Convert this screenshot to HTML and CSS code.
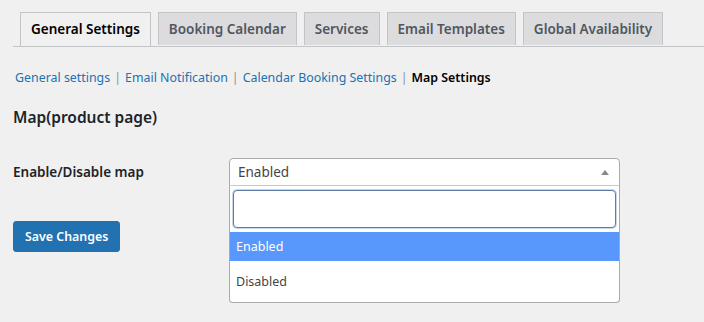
FILE: index.html
```html
<!DOCTYPE html>
<html lang="en">
<head>
  <meta charset="UTF-8">
  <title>Map Settings</title>
  <link rel="stylesheet" href="styles.css">
</head>
<body>
  <div class="wrap">
    <nav class="nav-tab-wrapper">
      <a class="nav-tab nav-tab-active">General Settings</a>
      <a class="nav-tab">Booking Calendar</a>
      <a class="nav-tab">Services</a>
      <a class="nav-tab">Email Templates</a>
      <a class="nav-tab">Global Availability</a>
    </nav>

    <ul class="subsubsub">
      <li><a href="#">General settings</a><span class="sep">|</span></li>
      <li><a href="#">Email Notification</a><span class="sep">|</span></li>
      <li><a href="#">Calendar Booking Settings</a><span class="sep">|</span></li>
      <li><span class="current">Map Settings</span></li>
    </ul>

    <h2 class="section-title">Map(product page)</h2>

    <div class="form-table">
      <div class="form-row">
        <label class="form-label">Enable/Disable map</label>
        <div class="select-wrap">
          <div class="select-box">
            <span class="select-value">Enabled</span>
            <span class="select-arrow"></span>
          </div>
          <!-- open dropdown lies over the button -->
          <div class="select-dropdown">
            <div class="select-search"><input type="text"></div>
            <ul class="select-results">
              <li class="option highlighted">Enabled</li>
              <li class="option">Disabled</li>
            </ul>
          </div>
        </div>
      </div>
    </div>

    <p class="submit">
      <button class="button-primary">Save Changes</button>
    </p>
  </div>
</body>
</html>
```

FILE: styles.css
```css
body {
  margin: 0;
  padding: 0;
  background: #f0f0f1;
  font-family: 'Noto Sans', 'Open Sans', sans-serif;
  color: #1d2327;
  font-size: 13px;
}
.wrap {
  padding: 12px 0 55px 13px;
}
.nav-tab-wrapper {
  display: flex;
  border-bottom: 1px solid #c3c4c7;
  height: 34px;
}
.nav-tab {
  display: block;
  margin-left: 7px;
  padding: 4px 10px;
  height: 24px;
  line-height: 24px;
  font-size: 13.5px;
  font-weight: 600;
  color: #50575e;
  background: #dcdcde;
  border: 1px solid #c3c4c7;
  border-bottom: none;
  white-space: nowrap;
}
.nav-tab-active {
  background: #f0f0f1;
  color: #000;
  height: 25px;
  margin-bottom: -1px;
}
.subsubsub {
  list-style: none;
  margin: 20px 0 0 2px;
  padding: 0;
  display: flex;
  line-height: 22px;
  font-size: 12.4px;
}
.subsubsub a {
  color: #2271b1;
  text-decoration: none;
}
.subsubsub .sep {
  color: #8c8f94;
  margin: 0 4px;
}
.subsubsub .current {
  color: #000;
  font-weight: 600;
}
.section-title {
  margin: 16px 0 0;
  font-size: 15.5px;
  font-weight: 600;
  line-height: 24px;
}
.form-table {
  margin-top: 29px;
}
.form-row {
  display: flex;
  align-items: flex-start;
}
.form-label {
  width: 216px;
  padding-top: 1px;
  font-size: 13.5px;
  font-weight: 600;
  line-height: 26px;
}
.select-wrap {
  position: relative;
  width: 391px;
}
.select-box {
  height: 26px;
  background: #fff;
  border: 1px solid #aaa;
  border-radius: 4px 4px 0 0;
  display: flex;
  align-items: center;
  padding: 0 8px;
}
.select-value {
  flex: 1;
  color: #444;
  font-size: 13.5px;
}
.select-arrow {
  width: 0;
  height: 0;
  border-left: 4px solid transparent;
  border-right: 4px solid transparent;
  border-bottom: 5px solid #888;
  margin-right: 2px;
}
.select-dropdown {
  position: absolute;
  top: 27px;
  left: 0;
  right: 0;
  background: #fff;
  border: 1px solid #aaa;
  border-top: 1px solid #c9c9c9;
  border-radius: 0 0 4px 4px;
  z-index: 2;
}
.select-search {
  padding: 4px 3px;
}
.select-search input {
  display: block;
  box-sizing: border-box;
  width: 100%;
  height: 38px;
  border: 1px solid #5b7ea8;
  border-radius: 4px;
  box-shadow: 0 0 0 1px #c5d7ea;
  outline: none;
}
.select-results {
  list-style: none;
  margin: 0;
  padding: 0 0 4px;
}
.option {
  height: 29px;
  line-height: 29px;
  padding: 0 6px;
  color: #444;
  font-size: 12.5px;
}
.option + .option {
  height: 37px;
  line-height: 41px;
}
.option.highlighted {
  background: #5897fb;
  color: #fff;
}
.submit {
  margin: 35px 0 0;
}
.button-primary {
  display: block;
  background: #2271b1;
  border: 1px solid #2271b1;
  border-radius: 3px;
  color: #fff;
  font-family: inherit;
  font-size: 12.4px;
  font-weight: 600;
  height: 31px;
  padding: 0 11px;
}
```
